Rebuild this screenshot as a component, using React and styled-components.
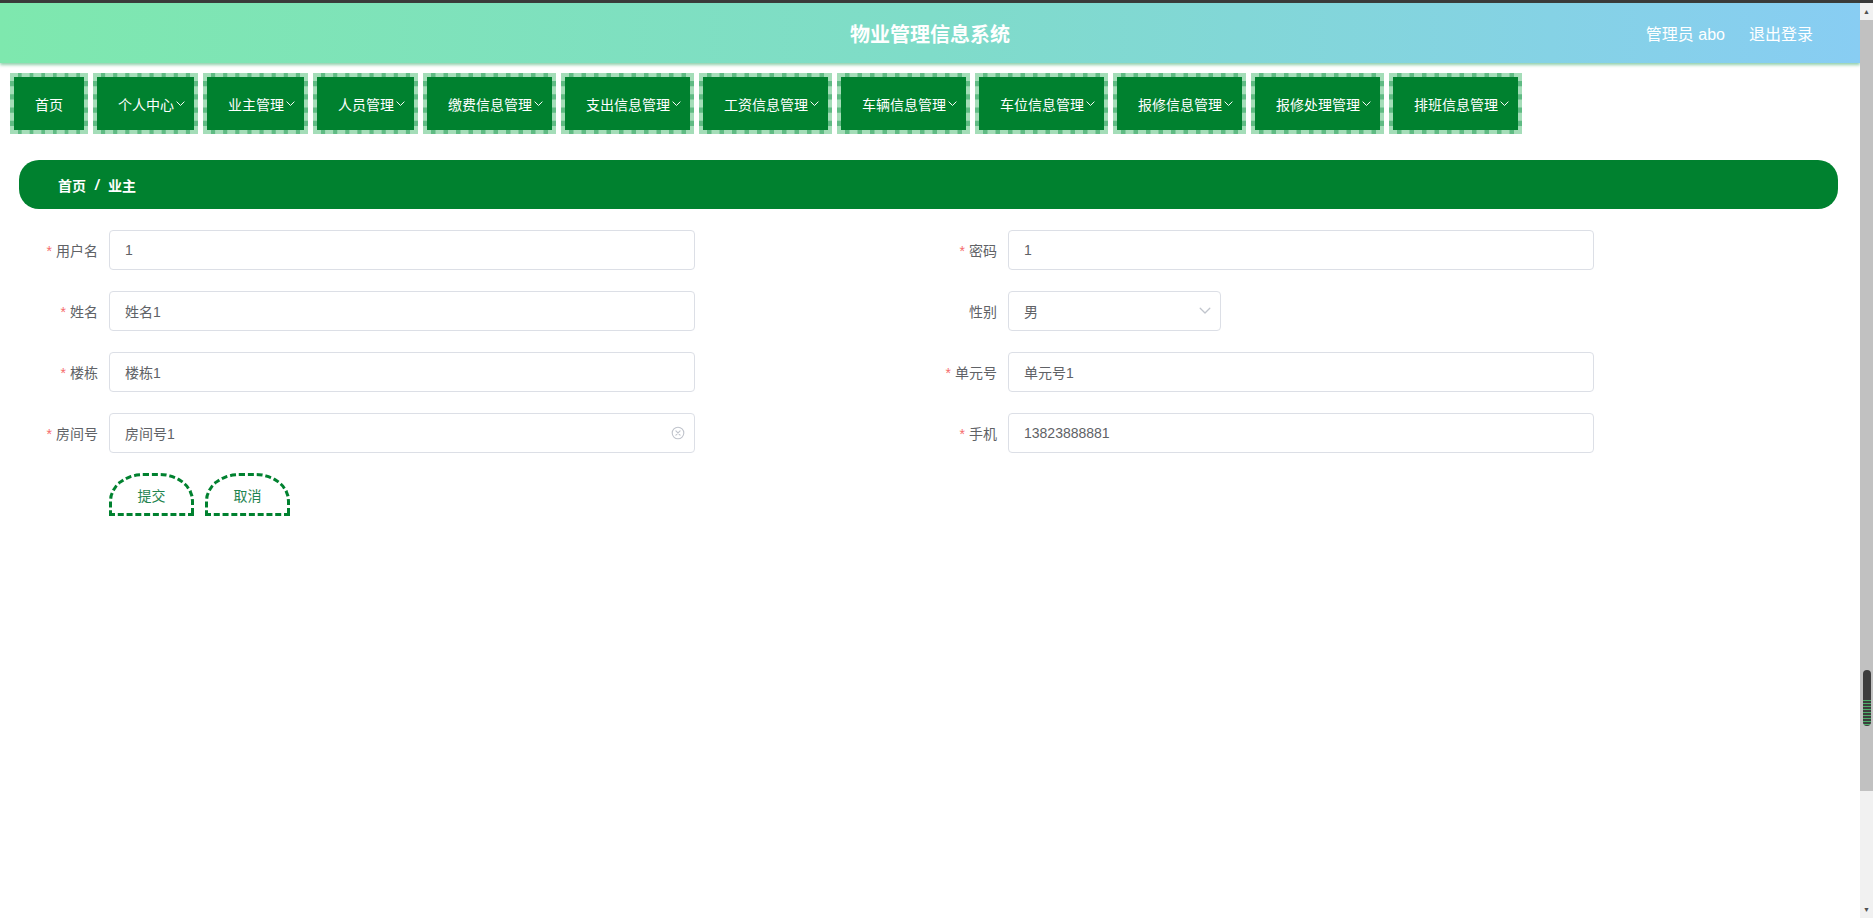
import React from 'react';
import styled, { createGlobalStyle } from 'styled-components';

const GlobalStyle = createGlobalStyle`
  html, body {
    margin: 0;
    padding: 0;
    height: 100%;
    overflow: hidden;
  }
  body {
    font-family: "Liberation Sans", "Noto Sans CJK SC", sans-serif;
    background: #fff;
  }
  #root {
    height: 100%;
  }
  * {
    box-sizing: border-box;
  }
`;

const menus = [
  { name: '首页' },
  { name: '个人中心', drop: true },
  { name: '业主管理', drop: true },
  { name: '人员管理', drop: true },
  { name: '缴费信息管理', drop: true },
  { name: '支出信息管理', drop: true },
  { name: '工资信息管理', drop: true },
  { name: '车辆信息管理', drop: true },
  { name: '车位信息管理', drop: true },
  { name: '报修信息管理', drop: true },
  { name: '报修处理管理', drop: true },
  { name: '排班信息管理', drop: true },
];

const fields = [
  { label: '用户名', value: '1', required: true },
  { label: '密码', value: '1', required: true },
  { label: '姓名', value: '姓名1', required: true },
  { label: '性别', value: '男', select: true },
  { label: '楼栋', value: '楼栋1', required: true },
  { label: '单元号', value: '单元号1', required: true },
  { label: '房间号', value: '房间号1', required: true, clearable: true },
  { label: '手机', value: '13823888881', required: true },
];

function ArrowDown({ color = '#fff', size = 9 }) {
  return (
    <svg width={size} height={size * 0.6} viewBox="0 0 10 6" fill="none">
      <polyline points="1,1 5,5 9,1" stroke={color} strokeWidth="1.1" strokeLinecap="round" strokeLinejoin="round" />
    </svg>
  );
}

function ClearIcon() {
  return (
    <svg width="14" height="14" viewBox="0 0 14 14" fill="none">
      <circle cx="7" cy="7" r="5.8" stroke="#c0c4cc" strokeWidth="1.1" />
      <path d="M4.9 4.9 L9.1 9.1 M9.1 4.9 L4.9 9.1" stroke="#c0c4cc" strokeWidth="1.1" strokeLinecap="round" />
    </svg>
  );
}

function App() {
  return (
    <>
      <GlobalStyle />
      <Window>
        <Main>
          <Header>
            <span />
            <Title>物业管理信息系统</Title>
            <UserBox>
              <span>管理员 abo</span>
              <span>退出登录</span>
            </UserBox>
          </Header>

          <Nav>
            {menus.map((m) => (
              <NavItem key={m.name} $drop={m.drop}>
                {m.name}
                {m.drop && (
                  <Caret>
                    <ArrowDown />
                  </Caret>
                )}
              </NavItem>
            ))}
          </Nav>

          <Breadcrumb>
            <span>首页</span>
            <Separator>/</Separator>
            <span>业主</span>
          </Breadcrumb>

          <Form>
            {fields.map((f) => (
              <Field key={f.label}>
                <Label>
                  {f.required && <Star>*</Star>}
                  {f.label}
                </Label>
                <InputBox $w={f.select ? 213 : 586}>
                  <TextInput readOnly value={f.value} />
                  {f.clearable && <ClearIcon />}
                  {f.select && <ArrowDown color="#c0c4cc" size={12} />}
                </InputBox>
              </Field>
            ))}
          </Form>

          <Actions>
            <ActionButton>提交</ActionButton>
            <ActionButton>取消</ActionButton>
          </Actions>
        </Main>

        <ScrollRail>
          <ScrollArrow>▲</ScrollArrow>
          <ScrollThumb>
            <ThumbGrip />
          </ScrollThumb>
          <ScrollTrack />
          <ScrollArrow>▼</ScrollArrow>
        </ScrollRail>
      </Window>
    </>
  );
}

export default App;

const Window = styled.div`
display: flex;
height: 100vh;
border-top: 3px solid #3a3a3a;
`;

const Main = styled.div`
flex: 1;
min-width: 0;
display: flex;
flex-direction: column;
`;

const Header = styled.header`
height: 60px;
flex-shrink: 0;
display: grid;
grid-template-columns: 1fr auto 1fr;
align-items: center;
background: linear-gradient(90deg, #7ee8ae 0%, #7fdcc9 50%, #88cdf3 100%);
box-shadow: 0 2px 3px rgba(70, 175, 115, 0.6);
`;

const Title = styled.h1`
margin: 0;
font-size: 20px;
font-weight: bold;
color: #fff;
letter-spacing: 0;
`;

const UserBox = styled.div`
justify-self: end;
display: flex;
gap: 24px;
padding-right: 47px;
font-size: 16px;
color: #fff;
`;

const Nav = styled.nav`
display: flex;
gap: 5px;
padding: 10px 0 0 10px;
`;

const NavItem = styled.div`
height: 61px;
display: flex;
align-items: center;
padding: 0 ${(p) => (p.$drop ? '9px' : '21px')} 0 21px;
border: 4px dashed #a4ddb8;
background: linear-gradient(#00812f, #00812f) padding-box, #5fbb83 border-box;
color: #fff;
font-size: 14px;
white-space: nowrap;
cursor: pointer;
`;

const Caret = styled.span`
display: inline-flex;
margin-left: 2px;
margin-top: 1px;
`;

const Breadcrumb = styled.div`
margin: 26px 22px 0 19px;
height: 49px;
display: flex;
align-items: center;
padding-left: 39px;
background: #00812f;
border-radius: 20px;
color: #fff;
font-size: 14px;
font-weight: bold;
`;

const Separator = styled.span`
margin: 0 9px;
font-style: italic;
`;

const Form = styled.div`
display: grid;
grid-template-columns: 1fr 1fr;
row-gap: 21px;
padding: 21px 33px 0 29px;
`;

const Field = styled.div`
display: flex;
align-items: center;
height: 40px;
`;

const Label = styled.label`
width: 80px;
padding-right: 11px;
text-align: right;
font-size: 14px;
color: #606266;
`;

const Star = styled.span`
color: #f56c6c;
margin-right: 4px;
`;

const InputBox = styled.div`
width: ${(p) => p.$w}px;
height: 40px;
display: flex;
align-items: center;
gap: 8px;
padding: 0 9px 0 15px;
border: 1px solid #dcdfe6;
border-radius: 4px;
background: #fff;
`;

const TextInput = styled.input`
flex: 1;
min-width: 0;
border: none;
outline: none;
padding: 0;
background: transparent;
font-family: inherit;
font-size: 14px;
color: #606266;
`;

const Actions = styled.div`
display: flex;
gap: 11px;
padding: 20px 0 0 109px;
`;

const ActionButton = styled.button`
width: 85px;
height: 43px;
border: 3px dashed #00812f;
border-radius: 34px 34px 0 0 / 28px 28px 0 0;
background: #fff;
color: #1f8450;
font-family: inherit;
font-size: 14px;
cursor: pointer;
`;

const ScrollRail = styled.div`
width: 13px;
flex-shrink: 0;
display: flex;
flex-direction: column;
background: #f1f1f1;
`;

const ScrollArrow = styled.div`
height: 17px;
flex-shrink: 0;
display: flex;
align-items: center;
justify-content: center;
font-size: 7px;
color: #505050;
background: #f1f1f1;
`;

const ScrollThumb = styled.div`
height: 771px;
flex-shrink: 0;
display: flex;
flex-direction: column;
align-items: center;
background: #c1c1c1;
`;

const ThumbGrip = styled.div`
margin-top: auto;
margin-bottom: 65px;
width: 8px;
height: 56px;
border-radius: 4px;
background:
  repeating-linear-gradient(#4caf6a 0 1px, #3d3d3d 1px 3px) bottom / 100% 26px no-repeat,
  #3d3d3d;
`;

const ScrollTrack = styled.div`
flex: 1;
background: #f1f1f1;
`;
